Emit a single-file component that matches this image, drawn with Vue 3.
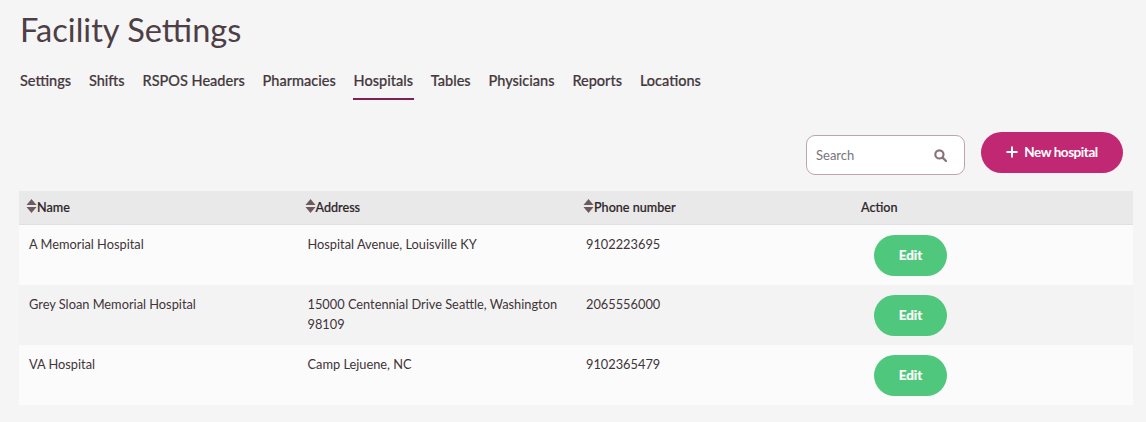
<script setup>
const tabs = ['Settings', 'Shifts', 'RSPOS Headers', 'Pharmacies', 'Hospitals', 'Tables', 'Physicians', 'Reports', 'Locations']

const hospitals = [
  { name: 'A Memorial Hospital', address: 'Hospital Avenue, Louisville KY', phone: '9102223695' },
  { name: 'Grey Sloan Memorial Hospital', address: '15000 Centennial Drive Seattle, Washington 98109', phone: '2065556000' },
  { name: 'VA Hospital', address: 'Camp Lejuene, NC', phone: '9102365479' }
]

const columns = ['Name', 'Address', 'Phone number']
</script>

<template>
  <div class="page">
    <h1 class="title">Facility Settings</h1>

    <nav class="tabs">
      <a v-for="tab in tabs" :key="tab" class="tab" :class="{ active: tab === 'Hospitals' }">{{ tab }}</a>
    </nav>

    <div class="toolbar">
      <div class="search">
        <span class="search-text">Search</span>
        <svg class="search-icon" width="13" height="13" viewBox="0 0 13 13" fill="none" stroke="#8a7378" stroke-width="2.2">
          <circle cx="5.4" cy="5.4" r="4.1" />
          <path d="M8.6 8.6l3.4 3.4" stroke-linecap="round" />
        </svg>
      </div>
      <button class="new-btn">
        <svg width="12" height="12" viewBox="0 0 12 12" stroke="#fff" stroke-width="2">
          <path d="M6 0.5v11M0.5 6h11" />
        </svg>
        <span>New hospital</span>
      </button>
    </div>

    <table class="table">
      <colgroup>
        <col class="col-name" />
        <col class="col-address" />
        <col class="col-phone" />
        <col />
      </colgroup>
      <thead>
        <tr>
          <th v-for="col in columns" :key="col" class="sortable">
            <span class="sort-head">
              <svg class="sort-icon" width="11" height="14" viewBox="0 0 11 14" fill="#6b5a60">
                <path d="M5.5 0L10.5 6H0.5z" />
                <path d="M0.5 8H10.5L5.5 14z" />
              </svg>
              {{ col }}
            </span>
          </th>
          <th class="action-head">Action</th>
        </tr>
      </thead>
      <tbody>
        <tr v-for="h in hospitals" :key="h.name">
          <td>{{ h.name }}</td>
          <td>{{ h.address }}</td>
          <td>{{ h.phone }}</td>
          <td class="action-cell"><button class="edit-btn">Edit</button></td>
        </tr>
      </tbody>
    </table>
  </div>
</template>

<style>
html, body {
  background: #f5f5f5;
}
</style>

<style scoped>
.page {
  padding: 0 13px 0 19px;
  font-family: Lato, "Liberation Sans", sans-serif;
  color: #4a3c42;
}

.title {
  margin: 0;
  padding: 10px 0 0 1px;
  font-size: 32.6px;
  font-weight: 400;
  line-height: 40px;
  color: #4d3f45;
}

.tabs {
  display: flex;
  gap: 17.875px;
  margin-top: 13px;
  padding-left: 1px;
}

.tab {
  position: relative;
  height: 37px;
  font-size: 14.5px;
  line-height: 36px;
  font-weight: 500;
  color: #44383d;
  -webkit-text-stroke: 0.2px #44383d;
}

.tab.active::after {
  content: '';
  position: absolute;
  left: -1px;
  right: -1px;
  bottom: 0;
  height: 2px;
  background: #7b2154;
}

.toolbar {
  display: flex;
  justify-content: flex-end;
  align-items: flex-start;
  gap: 16px;
  margin-top: 32px;
  padding-right: 10px;
}

.search {
  display: flex;
  align-items: center;
  justify-content: space-between;
  box-sizing: border-box;
  width: 159px;
  height: 40px;
  margin-top: 3px;
  padding: 0 17px 0 9px;
  background: #fff;
  border: 1px solid #bfa3b3;
  border-radius: 9px;
}

.search-text {
  font-size: 13px;
  color: #78747a;
}

.new-btn {
  display: flex;
  align-items: center;
  justify-content: center;
  gap: 6px;
  width: 142px;
  height: 41px;
  padding: 0 0 2px;
  border: none;
  border-radius: 21px;
  background: #c12873;
  color: #fff;
  font-family: inherit;
  font-size: 13.5px;
  font-weight: 700;
  letter-spacing: -0.45px;
}

.table {
  width: 1114px;
  margin-top: 16px;
  border-collapse: collapse;
  table-layout: fixed;
  font-size: 12.8px;
  color: #3f3438;
}

.col-name {
  width: 278.5px;
}

.col-address {
  width: 278.5px;
}

.col-phone {
  width: 275px;
}

th {
  height: 33px;
  padding: 0 10px;
  background: #e9e9e9;
  border-bottom: 1px solid #e2e0e4;
  text-align: left;
  font-size: 12.6px;
  font-weight: 500;
  color: #2e2629;
  -webkit-text-stroke: 0.2px #2e2629;
}

th.sortable {
  padding-left: 7px;
}

.sort-head {
  display: flex;
  align-items: center;
}

.sort-icon {
  margin-top: -3px;
}

td {
  height: 60px;
  box-sizing: border-box;
  padding: 9px 10px 0;
  vertical-align: top;
  line-height: 20px;
}

tbody tr:nth-child(odd) td {
  background: #fbfbfb;
}

tbody tr:nth-child(even) td {
  background: #f3f3f3;
}

td.action-cell {
  padding: 10px 0 0 23px;
}

.edit-btn {
  display: block;
  width: 73px;
  height: 41px;
  padding: 0 0 1px;
  border: none;
  border-radius: 21px;
  background: #4fc77c;
  color: #fff;
  font-family: inherit;
  font-size: 13.5px;
  font-weight: 700;
  -webkit-text-stroke: 0.2px #fff;
}
</style>
